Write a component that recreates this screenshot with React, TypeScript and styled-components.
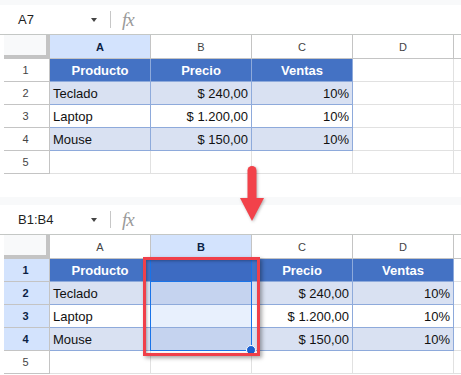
import React from "react";
import styled, { createGlobalStyle } from "styled-components";

const GlobalStyle = createGlobalStyle`
  html, body {
    margin: 0;
    padding: 0;
    background: #fff;
  }
  body {
    font-family: "Liberation Sans", Arial, sans-serif;
  }
`;

type Kind = "head" | "band" | "plain" | "none";
type Align = "left" | "center" | "right";

interface CellData {
  text?: string;
  kind: Kind;
  align?: Align;
}

interface SheetData {
  ref: string;
  strip: number;
  selCol: number;
  selRows: number[];
  rows: CellData[][];
}

const Page = styled.div`
  position: relative;
  width: 461px;
  height: 375px;
  display: flex;
  flex-direction: column;
  gap: 23px;
  overflow: hidden;
`;

const Sheet = styled.section`
  display: flex;
  flex-direction: column;
`;

const Strip = styled.div<{ $h: number }>`
  height: ${({ $h }) => $h}px;
  background: #f8f9fa;
`;

const FormulaBar = styled.div`
  height: 30px;
  box-sizing: border-box;
  border-bottom: 1px solid #c4c7c5;
  display: flex;
  align-items: center;
  padding-left: 18px;
  background: #fff;
`;

const NameBox = styled.span`
  width: 73px;
  font-size: 13px;
  color: #1f1f1f;
`;

const Caret = styled.span`
  width: 0;
  height: 0;
  border-left: 3.5px solid transparent;
  border-right: 3.5px solid transparent;
  border-top: 4px solid #444;
  margin-top: 1px;
`;

const Divider = styled.span`
  width: 1px;
  height: 17px;
  background: #c7c7c7;
  margin-left: 13px;
`;

const Fx = styled.span`
  margin-left: 11px;
  font-family: "Liberation Serif", "Times New Roman", serif;
  font-style: italic;
  font-size: 19px;
  color: #9a9a9a;
  letter-spacing: -1px;
  line-height: 1;
`;

const Grid = styled.div`
  position: relative;
  margin-left: 4px;
  display: grid;
  grid-template-columns: 46px 101px 101px 101px 101px 1fr;
  grid-auto-rows: 23px;
  grid-template-rows: 24px;
`;

const Corner = styled.div`
  box-sizing: border-box;
  background: #f8f9fa;
  border-right: 4px solid #c4c4c4;
  border-bottom: 4px solid #c4c4c4;
`;

const ColHead = styled.div<{ $sel?: boolean; $last?: boolean }>`
  box-sizing: border-box;
  background: ${({ $sel }) => ($sel ? "#d3e3fd" : "#fff")};
  border-right: ${({ $last }) => ($last ? "none" : "1px solid #c4c4c4")};
  border-bottom: 1px solid #c4c4c4;
  display: flex;
  align-items: center;
  justify-content: center;
  font-size: 11px;
  font-weight: ${({ $sel }) => ($sel ? 700 : 400)};
  color: ${({ $sel }) => ($sel ? "#0b1f44" : "#444")};
  padding-top: 1px;
`;

const RowHead = styled.div<{ $sel?: boolean }>`
  box-sizing: border-box;
  background: ${({ $sel }) => ($sel ? "#d3e3fd" : "#fff")};
  border-right: 1px solid #c4c4c4;
  border-bottom: 1px solid #c4c4c4;
  display: flex;
  align-items: center;
  justify-content: center;
  font-size: 11px;
  font-weight: ${({ $sel }) => ($sel ? 700 : 400)};
  color: ${({ $sel }) => ($sel ? "#0b1f44" : "#444")};
  padding-right: 2px;
`;

const bg = (kind: Kind, sel: boolean) => {
  if (kind === "head") return sel ? "#3d6bc2" : "#4472c4";
  if (kind === "band") return sel ? "#c5d3ef" : "#d9e1f2";
  if (kind === "plain") return sel ? "#e8f0fd" : "#fff";
  return "#fff";
};

const Cell = styled.div<{ $kind: Kind; $align: Align; $sel: boolean; $last?: boolean }>`
  box-sizing: border-box;
  background: ${({ $kind, $sel }) => bg($kind, $sel)};
  border-right: ${({ $kind, $last }) =>
    $last ? "none" : `1px solid ${$kind === "none" ? "#e1e1e1" : "#8eaadb"}`};
  border-bottom: 1px solid ${({ $kind }) => ($kind === "none" ? "#e1e1e1" : "#8eaadb")};
  display: flex;
  align-items: center;
  justify-content: ${({ $align }) =>
    $align === "right" ? "flex-end" : $align === "center" ? "center" : "flex-start"};
  padding: 0 3px 0 3px;
  font-size: 13px;
  font-weight: ${({ $kind }) => ($kind === "head" ? 700 : 400)};
  color: ${({ $kind }) => ($kind === "head" ? "#fff" : "#111")};
  white-space: nowrap;
  overflow: hidden;
`;

const Selection = styled.div`
  position: absolute;
  left: 146px;
  top: 23px;
  width: 102px;
  height: 93px;
  box-sizing: border-box;
  border: 1px solid #1a73e8;
  pointer-events: none;
`;

const ActiveCell = styled.div`
  position: absolute;
  left: 0;
  top: 0;
  right: 0;
  height: 23px;
  box-sizing: border-box;
  border-bottom: 1px solid #1a73e8;
`;

const Handle = styled.span`
  position: absolute;
  right: -5px;
  bottom: -5px;
  width: 8px;
  height: 8px;
  border-radius: 50%;
  background: #1a5fd0;
  border: 1px solid #fff;
`;

const Highlight = styled.div`
  position: absolute;
  left: 139px;
  top: 22px;
  width: 117px;
  height: 99px;
  box-sizing: border-box;
  border: 3.5px solid #f0404a;
  box-shadow: 2px 2px 4px rgba(0, 0, 0, 0.35), inset 1px 1px 3px rgba(0, 0, 0, 0.3);
  pointer-events: none;
`;

const Arrow = styled.svg`
  position: absolute;
  left: 240px;
  top: 166px;
  filter: drop-shadow(1px 1px 1.5px rgba(0, 0, 0, 0.3));
`;

const letters = ["A", "B", "C", "D", ""];

const first: SheetData = {
  ref: "A7",
  strip: 5,
  selCol: 0,
  selRows: [],
  rows: [
    [
      { text: "Producto", kind: "head", align: "center" },
      { text: "Precio", kind: "head", align: "center" },
      { text: "Ventas", kind: "head", align: "center" },
      { kind: "none" },
    ],
    [
      { text: "Teclado", kind: "band" },
      { text: "$ 240,00", kind: "band", align: "right" },
      { text: "10%", kind: "band", align: "right" },
      { kind: "none" },
    ],
    [
      { text: "Laptop", kind: "plain" },
      { text: "$ 1.200,00", kind: "plain", align: "right" },
      { text: "10%", kind: "plain", align: "right" },
      { kind: "none" },
    ],
    [
      { text: "Mouse", kind: "band" },
      { text: "$ 150,00", kind: "band", align: "right" },
      { text: "10%", kind: "band", align: "right" },
      { kind: "none" },
    ],
    [{ kind: "none" }, { kind: "none" }, { kind: "none" }, { kind: "none" }],
  ],
};

const second: SheetData = {
  ref: "B1:B4",
  strip: 8,
  selCol: 1,
  selRows: [0, 1, 2, 3],
  rows: [
    [
      { text: "Producto", kind: "head", align: "center" },
      { kind: "head" },
      { text: "Precio", kind: "head", align: "center" },
      { text: "Ventas", kind: "head", align: "center" },
    ],
    [
      { text: "Teclado", kind: "band" },
      { kind: "band" },
      { text: "$ 240,00", kind: "band", align: "right" },
      { text: "10%", kind: "band", align: "right" },
    ],
    [
      { text: "Laptop", kind: "plain" },
      { kind: "plain" },
      { text: "$ 1.200,00", kind: "plain", align: "right" },
      { text: "10%", kind: "plain", align: "right" },
    ],
    [
      { text: "Mouse", kind: "band" },
      { kind: "band" },
      { text: "$ 150,00", kind: "band", align: "right" },
      { text: "10%", kind: "band", align: "right" },
    ],
    [{ kind: "none" }, { kind: "none" }, { kind: "none" }, { kind: "none" }],
  ],
};

function SheetView({ data, children }: { data: SheetData; children?: React.ReactNode }) {
  return (
    <Sheet>
      <Strip $h={data.strip} />
      <FormulaBar>
        <NameBox>{data.ref}</NameBox>
        <Caret />
        <Divider />
        <Fx>fx</Fx>
      </FormulaBar>
      <Grid>
        <Corner />
        {letters.map((l, i) => (
          <ColHead key={i} $sel={i === data.selCol} $last={i === letters.length - 1}>
            {l}
          </ColHead>
        ))}
        {data.rows.map((row, r) => (
          <React.Fragment key={r}>
            <RowHead $sel={data.selRows.includes(r)}>{r + 1}</RowHead>
            {row.map((c, ci) => (
              <Cell
                key={ci}
                $kind={c.kind}
                $align={c.align ?? "left"}
                $sel={data.selRows.includes(r) && ci === data.selCol}
              >
                {c.text}
              </Cell>
            ))}
            <Cell $kind="none" $align="left" $sel={false} $last />
          </React.Fragment>
        ))}
        {children}
      </Grid>
    </Sheet>
  );
}

export default function App() {
  return (
    <>
      <GlobalStyle />
      <Page>
        <SheetView data={first} />
        <SheetView data={second}>
          <Selection>
            <ActiveCell />
            <Handle />
          </Selection>
          <Highlight />
        </SheetView>
        <Arrow width="24" height="56" viewBox="0 0 24 56">
          <path d="M7.5 4.5 A4.5 4.5 0 0 1 16.5 4.5 V33 H7.5 Z" fill="#f2424a" />
          <path d="M0 32 H24 L12 55 Z" fill="#f2424a" />
        </Arrow>
      </Page>
    </>
  );
}
